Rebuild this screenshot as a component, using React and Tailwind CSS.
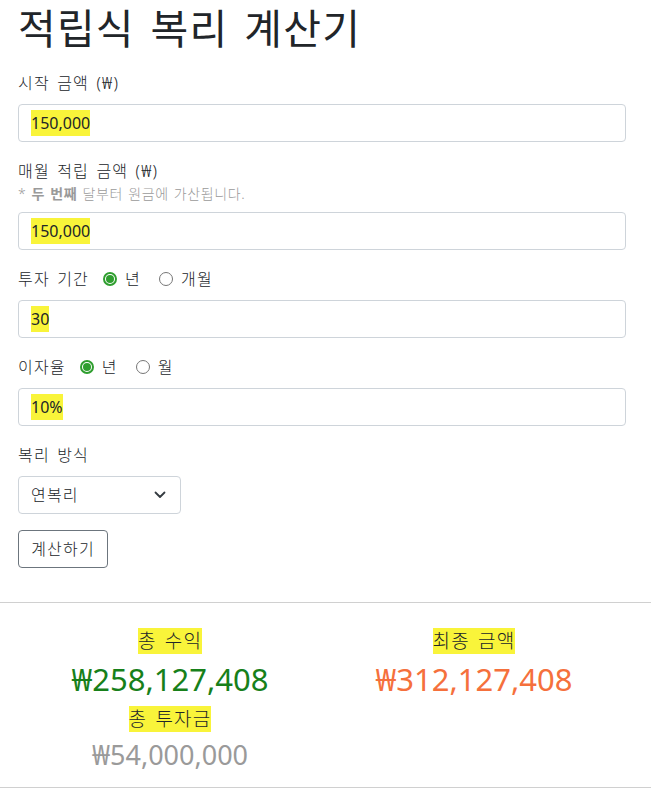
import React from 'react';

const hl = 'bg-[#f9f43a]';
const ko = 'tracking-[1.2px] [word-spacing:2px]';

const Radio = ({ checked, label }) => (
  <span className="inline-flex items-center gap-[8px] mr-[18px]">
    {checked ? (
      <span className="w-[14px] h-[14px] rounded-full border-[2px] border-[#2f9e2f] flex items-center justify-center">
        <span className="w-[8px] h-[8px] rounded-full bg-[#2f9e2f]"></span>
      </span>
    ) : (
      <span className="w-[14px] h-[14px] rounded-full border border-[#767676] bg-white"></span>
    )}
    <span className={ko}>{label}</span>
  </span>
);

const Field = ({ children }) => (
  <div className="h-[38px] w-full border border-[#ced4da] rounded-[4px] px-[12px] flex items-center bg-white">
    <span className={`${hl} font-normal`}>{children}</span>
  </div>
);

const App = () => {
  return (
    <div
      className="w-[651px] bg-white text-[#212529] text-[16px] leading-[26px] font-light"
      style={{ fontFamily: '"Noto Sans", "Noto Sans CJK KR", sans-serif' }}
    >
      <div className="pl-[18px] pr-[25px]">
        <h1 className="text-[41px] leading-[56px] font-normal tracking-[1.2px] [word-spacing:4px] mb-[14px]">적립식 복리 계산기</h1>

        <div className="mb-[16px]">
          <label className={`block mb-[8px] ${ko}`}>시작 금액 (₩)</label>
          <Field>150,000</Field>
        </div>

        <div className="mb-[16px]">
          <label className={`block ${ko}`}>매월 적립 금액 (₩)</label>
          <p className="text-[14px] leading-[20px] text-[#9a9a9a] mb-[8px] tracking-[0.6px] [word-spacing:1px]">
            * <b className="font-bold">두 번째</b> 달부터 원금에 가산됩니다.
          </p>
          <Field>150,000</Field>
        </div>

        <div className="mb-[16px]">
          <div className="flex items-center h-[26px] mb-[8px]">
            <span className={`mr-[14px] ${ko}`}>투자 기간</span>
            <Radio checked label="년" />
            <Radio label="개월" />
          </div>
          <Field>30</Field>
        </div>

        <div className="mb-[16px]">
          <div className="flex items-center h-[26px] mb-[8px]">
            <span className={`mr-[14px] ${ko}`}>이자율</span>
            <Radio checked label="년" />
            <Radio label="월" />
          </div>
          <Field>10%</Field>
        </div>

        <div className="mb-[16px]">
          <label className={`block mb-[8px] ${ko}`}>복리 방식</label>
          <div className="h-[38px] w-[163px] border border-[#ced4da] rounded-[4px] pl-[12px] pr-[14px] flex items-center justify-between">
            <span className={ko}>연복리</span>
            <svg width="12" height="8" viewBox="0 0 12 8" fill="none">
              <path d="M1.5 1.5 L6 6 L10.5 1.5" stroke="#343a40" strokeWidth="1.8" strokeLinecap="round" strokeLinejoin="round" />
            </svg>
          </div>
        </div>

        <button className={`h-[38px] w-[90px] border border-[#6c757d] rounded-[4px] bg-white text-[#212529] ${ko}`}>
          계산하기
        </button>
      </div>

      <hr className="mt-[34px] border-t border-[#d0d0d0]" />

      <div className="pl-[18px] pr-[25px] pt-[24px] pb-[10px] grid grid-cols-2 text-center">
        <div>
          <div className={`text-[19px] leading-[28px] ${ko}`}><span className={hl}>총 수익</span></div>
          <div className="text-[31px] leading-[48px] font-normal text-[#17801a]">₩258,127,408</div>
          <div className={`text-[19px] leading-[28px] mt-[2px] ${ko}`}><span className={hl}>총 투자금</span></div>
          <div className="text-[27px] leading-[44px] font-normal text-[#9a9a9a]">₩54,000,000</div>
        </div>
        <div>
          <div className={`text-[19px] leading-[28px] ${ko}`}><span className={hl}>최종 금액</span></div>
          <div className="text-[31px] leading-[48px] font-normal text-[#f5703c]">₩312,127,408</div>
        </div>
      </div>

      <hr className="border-t border-[#d0d0d0]" />
    </div>
  );
};

export default App;
